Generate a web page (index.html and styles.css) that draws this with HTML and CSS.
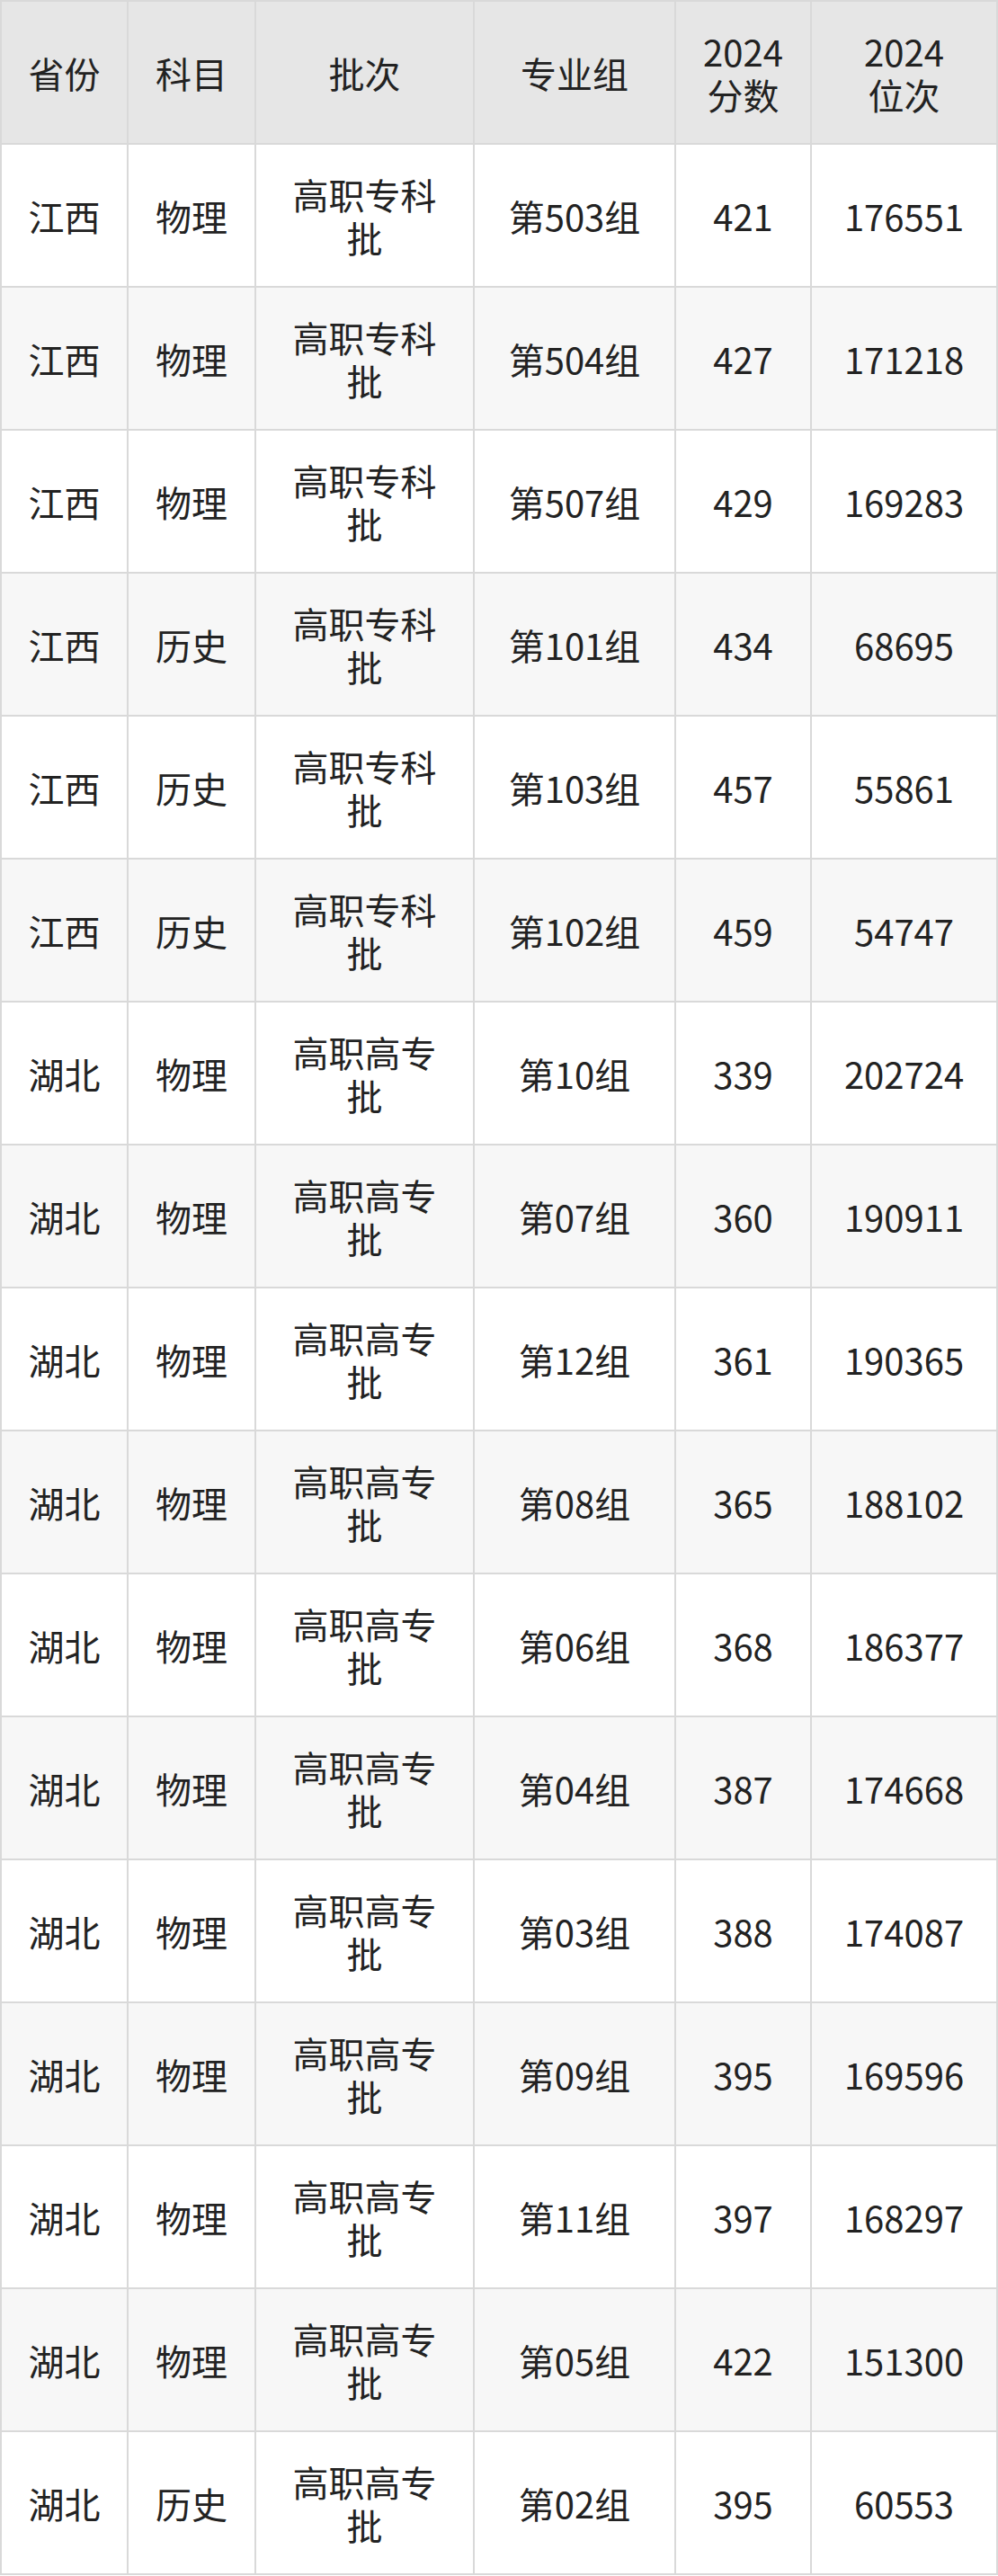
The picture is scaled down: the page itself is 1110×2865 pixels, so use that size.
FILE: index.html
```html
<!DOCTYPE html>
<html lang="zh-CN">
<head>
<meta charset="utf-8">
<title>2024 分数位次</title>
<link rel="stylesheet" href="styles.css">
</head>
<body>
<table class="score-table">
  <thead>
    <tr>
      <th class="c1">省份</th>
      <th class="c2">科目</th>
      <th class="c3">批次</th>
      <th class="c4">专业组</th>
      <th class="c5">2024<br>分数</th>
      <th class="c6">2024<br>位次</th>
    </tr>
  </thead>
  <tbody>
    <tr><td>江西</td><td>物理</td><td>高职专科<br>批</td><td>第503组</td><td>421</td><td>176551</td></tr>
    <tr><td>江西</td><td>物理</td><td>高职专科<br>批</td><td>第504组</td><td>427</td><td>171218</td></tr>
    <tr><td>江西</td><td>物理</td><td>高职专科<br>批</td><td>第507组</td><td>429</td><td>169283</td></tr>
    <tr><td>江西</td><td>历史</td><td>高职专科<br>批</td><td>第101组</td><td>434</td><td>68695</td></tr>
    <tr><td>江西</td><td>历史</td><td>高职专科<br>批</td><td>第103组</td><td>457</td><td>55861</td></tr>
    <tr><td>江西</td><td>历史</td><td>高职专科<br>批</td><td>第102组</td><td>459</td><td>54747</td></tr>
    <tr><td>湖北</td><td>物理</td><td>高职高专<br>批</td><td>第10组</td><td>339</td><td>202724</td></tr>
    <tr><td>湖北</td><td>物理</td><td>高职高专<br>批</td><td>第07组</td><td>360</td><td>190911</td></tr>
    <tr><td>湖北</td><td>物理</td><td>高职高专<br>批</td><td>第12组</td><td>361</td><td>190365</td></tr>
    <tr><td>湖北</td><td>物理</td><td>高职高专<br>批</td><td>第08组</td><td>365</td><td>188102</td></tr>
    <tr><td>湖北</td><td>物理</td><td>高职高专<br>批</td><td>第06组</td><td>368</td><td>186377</td></tr>
    <tr><td>湖北</td><td>物理</td><td>高职高专<br>批</td><td>第04组</td><td>387</td><td>174668</td></tr>
    <tr><td>湖北</td><td>物理</td><td>高职高专<br>批</td><td>第03组</td><td>388</td><td>174087</td></tr>
    <tr><td>湖北</td><td>物理</td><td>高职高专<br>批</td><td>第09组</td><td>395</td><td>169596</td></tr>
    <tr><td>湖北</td><td>物理</td><td>高职高专<br>批</td><td>第11组</td><td>397</td><td>168297</td></tr>
    <tr><td>湖北</td><td>物理</td><td>高职高专<br>批</td><td>第05组</td><td>422</td><td>151300</td></tr>
    <tr><td>湖北</td><td>历史</td><td>高职高专<br>批</td><td>第02组</td><td>395</td><td>60553</td></tr>
  </tbody>
</table>
</body>
</html>
```

FILE: styles.css
```css
html, body {
  margin: 0;
  padding: 0;
  background: #ffffff;
}

.score-table {
  width: 1110px;
  table-layout: fixed;
  border-collapse: separate;
  border-spacing: 0;
  border-top: 2px solid #d9d9d9;
  border-left: 2px solid #d9d9d9;
  font-family: "Noto Sans CJK SC", "Noto Sans", sans-serif;
  font-size: 40px;
  line-height: 48px;
  color: #222222;
}

.score-table th,
.score-table td {
  box-sizing: border-box;
  border-right: 2px solid #d9d9d9;
  border-bottom: 2px solid #d9d9d9;
  padding: 31px 20px 30px;
  text-align: center;
  vertical-align: middle;
  font-weight: normal;
}

.score-table thead th {
  background: #e6e6e6;
}

.score-table tbody tr:nth-child(even) td {
  background: #f7f7f7;
}

.c1 { width: 141px; }
.c2 { width: 142px; }
.c3 { width: 243px; }
.c4 { width: 224px; }
.c5 { width: 151px; }
.c6 { width: 207px; }
```
